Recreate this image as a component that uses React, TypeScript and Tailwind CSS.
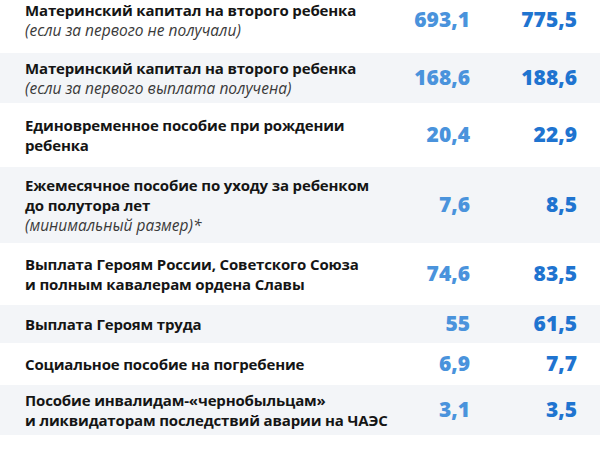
// Таблица выплат: строки с описанием пособия и двумя суммами (тыс. руб.)

type Row = {
  title: string[];
  note?: string;
  before: string;
  after: string;
  // высота полосы строки, как в макете
  h: string;
};

const ROWS: Row[] = [
  {
    title: ["Материнский капитал на второго ребенка"],
    note: "(если за первого не получали)",
    before: "693,1",
    after: "775,5",
    h: "h-[66px] -mt-[13px]", // верх строки срезан краем кадра
  },
  {
    title: ["Материнский капитал на второго ребенка"],
    note: "(если за первого выплата получена)",
    before: "168,6",
    after: "188,6",
    h: "h-[50px]",
  },
  {
    title: ["Единовременное пособие при рождении", "ребенка"],
    before: "20,4",
    after: "22,9",
    h: "h-[64px]",
  },
  {
    title: ["Ежемесячное пособие по уходу за ребенком", "до полутора лет"],
    note: "(минимальный размер)*",
    before: "7,6",
    after: "8,5",
    h: "h-[76px]",
  },
  {
    title: ["Выплата Героям России, Советского Союза", "и полным кавалерам ордена Славы"],
    before: "74,6",
    after: "83,5",
    h: "h-[62px]",
  },
  { title: ["Выплата Героям труда"], before: "55", after: "61,5", h: "h-[38px]" },
  {
    title: ["Социальное пособие на погребение"],
    before: "6,9",
    after: "7,7",
    h: "h-[42px]",
  },
  {
    title: ["Пособие инвалидам-«чернобыльцам»", "и ликвидаторам последствий аварии на ЧАЭС"],
    before: "3,1",
    after: "3,5",
    h: "h-[50px]",
  },
];

function PaymentRow({ row, shaded }: { row: Row; shaded: boolean }) {
  return (
    <div
      className={`flex items-center pl-[25px] pr-[23px] ${row.h} ${
        shaded ? "bg-[#f3f5f8]" : "bg-white"
      }`}
    >
      <div className="min-w-0 flex-1 whitespace-nowrap leading-[20px]">
        {row.title.map((line) => (
          <div key={line} className="text-[15px] font-bold tracking-[-0.15px] text-[#151515]">
            {line}
          </div>
        ))}
        {row.note && (
          <div className="text-[15.5px] italic text-[#3a3a3a]">{row.note}</div>
        )}
      </div>
      <div className="w-[100px] shrink-0 text-right text-[21px] font-extrabold text-[#4a93dc]">
        {row.before}
      </div>
      <div className="w-[107px] shrink-0 text-right text-[21px] font-extrabold text-[#1f74d0]">
        {row.after}
      </div>
    </div>
  );
}

export default function App() {
  return (
    <div
      className="h-[450px] w-[600px] overflow-hidden bg-white"
      style={{ fontFamily: '"Open Sans", "Noto Sans", sans-serif' }}
    >
      {ROWS.map((row, i) => (
        <PaymentRow key={i} row={row} shaded={i % 2 === 1} />
      ))}
    </div>
  );
}
